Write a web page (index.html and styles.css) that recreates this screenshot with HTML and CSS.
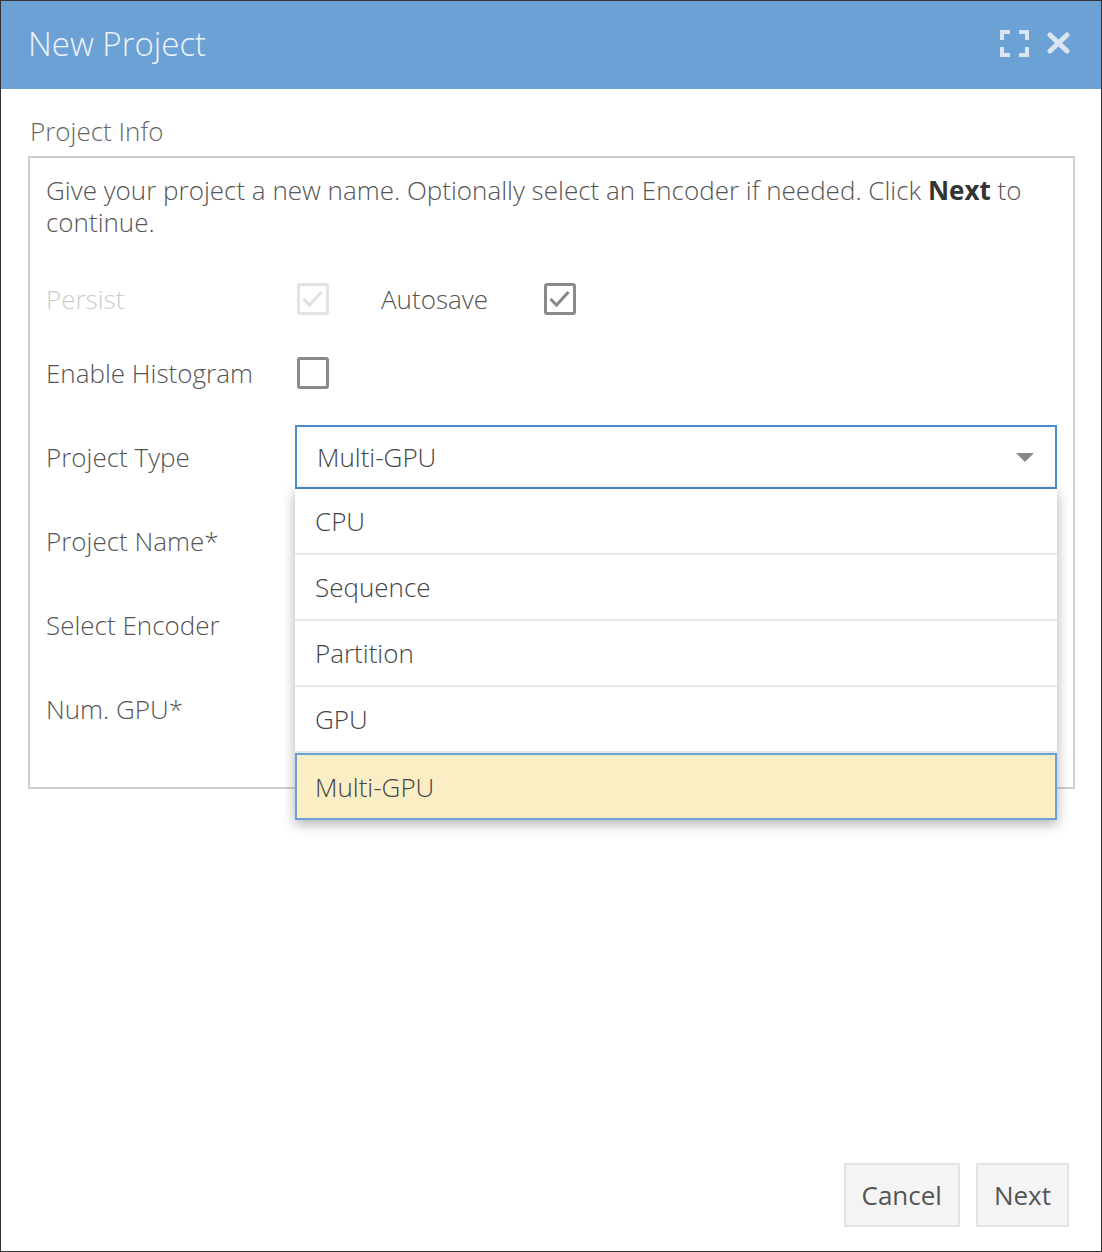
FILE: index.html
```html
<!DOCTYPE html>
<html>
<head>
<meta charset="utf-8">
<link rel="stylesheet" href="styles.css">
</head>
<body>
<div class="dialog">
  <div class="header">
    <div class="title">New Project</div>
    <div class="header-icons">
      <svg class="icon-max" width="29" height="27" viewBox="0 0 29 27">
        <path d="M2 10V2h8M19 2h8v8M27 17v8h-8M10 25H2v-8" fill="none" stroke="#dbe5f0" stroke-width="4"/>
      </svg>
      <svg class="icon-close" width="23" height="22" viewBox="0 0 23 22">
        <path d="M3 3L20 19M20 3L3 19" stroke="#dbe5f0" stroke-width="5" stroke-linecap="round"/>
      </svg>
    </div>
  </div>
  <div class="content">
    <div class="section-title">Project Info</div>
    <div class="box">
      <p class="desc">Give your project a new name. Optionally select an Encoder if needed. Click <b>Next</b> to continue.</p>
      <div class="row row-check">
        <div class="label disabled">Persist</div>
        <span class="check disabled">
          <svg width="26" height="26" viewBox="0 0 26 26"><path d="M3.5 13l6 6 12-13" fill="none" stroke="#e0e0e0" stroke-width="3"/></svg>
        </span>
        <div class="label2">Autosave</div>
        <span class="check">
          <svg width="26" height="26" viewBox="0 0 26 26"><path d="M3.5 13l6 6 12-13" fill="none" stroke="#888" stroke-width="3"/></svg>
        </span>
      </div>
      <div class="row row-check">
        <div class="label">Enable Histogram</div>
        <span class="check"></span>
      </div>
      <div class="row row-field">
        <div class="label">Project Type</div>
        <div class="select-wrap">
          <div class="select">
            <span>Multi-GPU</span>
            <span class="caret"></span>
          </div>
          <ul class="dropdown">
            <li>CPU</li>
            <li>Sequence</li>
            <li>Partition</li>
            <li>GPU</li>
            <li class="selected">Multi-GPU</li>
          </ul>
        </div>
      </div>
      <div class="row row-field">
        <div class="label">Project Name*</div>
        <div class="input"></div>
      </div>
      <div class="row row-field">
        <div class="label">Select Encoder</div>
        <div class="input"></div>
      </div>
      <div class="row row-field last">
        <div class="label">Num. GPU*</div>
        <div class="input"></div>
      </div>
    </div>
  </div>
  <div class="footer">
    <button class="btn">Cancel</button>
    <button class="btn">Next</button>
  </div>
</div>
</body>
</html>
```

FILE: styles.css
```css
* { box-sizing: border-box; }
html, body { margin: 0; padding: 0; background: #fff; }
body { font-family: "Open Sans", "Liberation Sans", sans-serif; font-weight: 300; color: #555; }
.dialog {
  width: 1102px; height: 1252px;
  border: 1px solid #333;
  display: flex; flex-direction: column;
  background: #fff;
}
.header {
  height: 88px; background: #6ca1d6;
  display: flex; align-items: center; justify-content: space-between;
  padding: 0 31px 0 27px;
  flex: none;
}
.title { font-size: 33px; line-height: 40px; color: #eef3f8; margin-top: -3px; }
.header-icons { display: flex; align-items: center; gap: 18px; margin-top: -4px; }
.icon-max { display: block; }
.icon-close { display: block; }
.content { flex: 1; padding: 25px 26px 0 27px; }
.section-title { font-size: 26px; color: #666; padding-left: 2px; line-height: 34px; margin-bottom: 8px; }
.box {
  border: 2px solid #cfcfcf;
  padding: 16px 16px 47px 16px;
}
.desc { margin: 0 0 35px 0; font-size: 26px; line-height: 32px; color: #555; }
.desc b { font-weight: 700; color: #333; }
.row { display: flex; align-items: center; }
.label { width: 250px; flex: none; font-size: 26px; color: #555; }
.label.disabled { color: #ccc; }
.label2 { font-size: 26px; color: #555; margin-left: 52px; width: 162px; }
.row-check { height: 52px; margin-bottom: 22px; }
.row-check + .row-field { margin-top: 27px; }
.row-field { height: 62px; margin-bottom: 22px; }
.row-field.last { margin-bottom: 0; }
.check {
  width: 32px; height: 32px; flex: none;
  border: 3px solid #8a8a8a; border-radius: 3px;
  display: flex; align-items: center; justify-content: center;
  margin-left: 1px;
}
.check svg { display: block; }
.check.disabled { border-color: #e2e2e2; }
.select-wrap { position: relative; flex: 1; height: 62px; }
.select {
  height: 64px; border: 2px solid #4a8bcb;
  display: flex; align-items: center; justify-content: space-between;
  padding: 0 21px 0 20px; font-size: 26px; color: #444; background: #fff;
  margin-top: -1px; margin-left: -1px;
}
.caret {
  width: 0; height: 0;
  border-left: 9px solid transparent; border-right: 9px solid transparent;
  border-top: 9px solid #888;
}
.input { flex: 1; height: 62px; border: 2px solid #ccc; }
.dropdown {
  position: absolute; left: -1px; right: 0; top: 63px;
  margin: 0; padding: 0; list-style: none;
  background: #fff;
  box-shadow: 0 4px 12px rgba(0,0,0,0.32);
  z-index: 5;
}
.dropdown li {
  height: 66px; display: flex; align-items: center;
  padding-left: 20px; font-size: 26px; color: #444;
  border-bottom: 2px solid #e7e7e7;
}
.dropdown li.selected {
  background: #fbeec5; border: 2px solid #6a9fd8; height: 67px; padding-left: 18px;
}
.footer {
  flex: none; display: flex; justify-content: flex-end; gap: 16px;
  padding: 0 32px 24px 0;
}
.btn {
  font-family: "Open Sans", "Liberation Sans", sans-serif; font-weight: 400;
  font-size: 26px; color: #555;
  background: #f4f4f4; border: 2px solid #e3e3e3;
  height: 64px; padding: 0 16px;
}
```
